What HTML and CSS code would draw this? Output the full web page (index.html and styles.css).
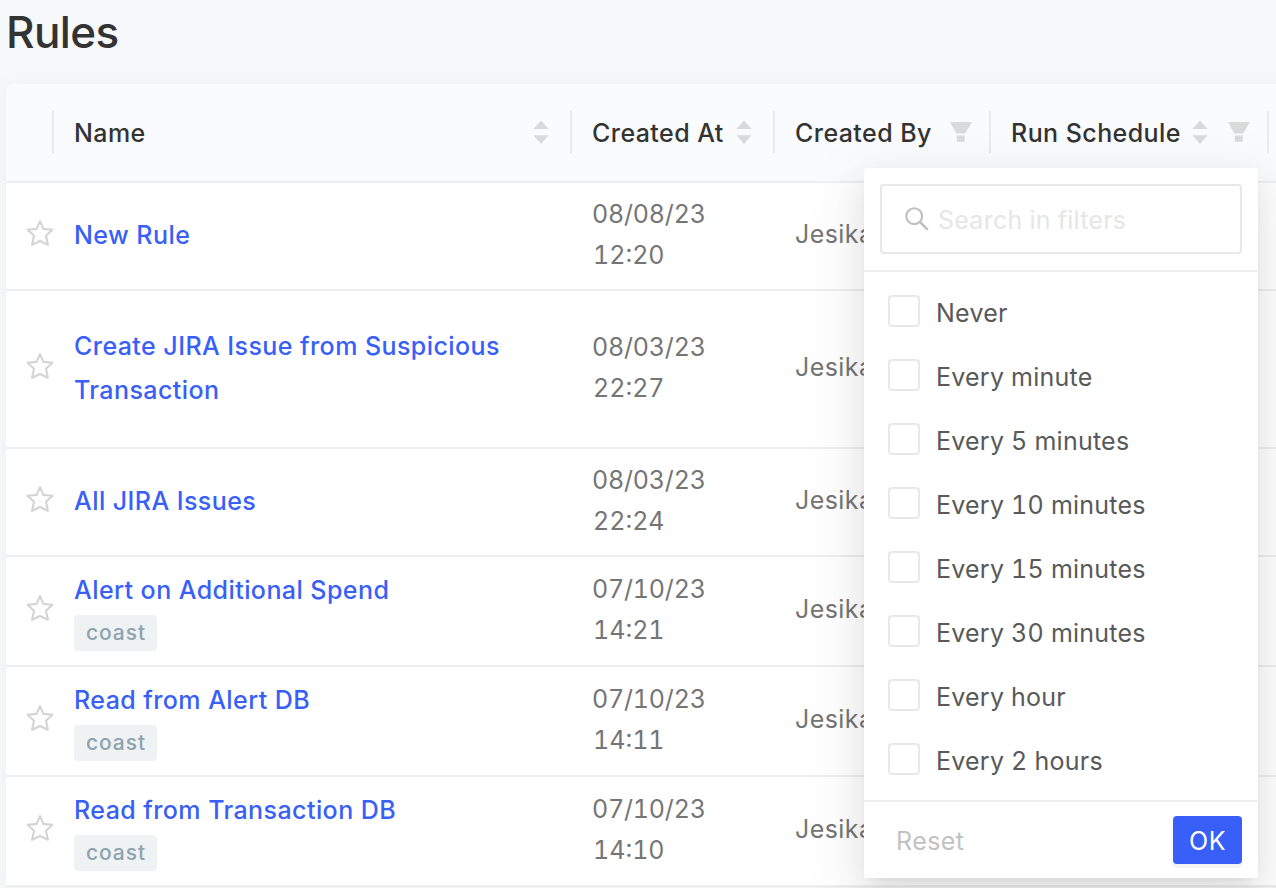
FILE: index.html
```html
<!DOCTYPE html>
<html lang="en">
<head>
<meta charset="utf-8">
<title>Rules</title>
<link rel="stylesheet" href="styles.css">
</head>
<body>
<svg class="defs" aria-hidden="true">
  <symbol id="star" viewBox="0 0 28 28"><path d="M14 2.2L17.4 9.9L26.4 10.8L20 16.7L21.9 25.8L14 22L6.1 25.8L8 16.7L1.6 10.8L10.6 9.9Z" fill="none" stroke="#d4d4d4" stroke-width="2.1" stroke-linejoin="round"/></symbol>
  <symbol id="sort" viewBox="0 0 16 24"><path d="M8 0.5L15.7 9H0.3ZM8 24L0.3 15.3H15.7Z" fill="#d9dada"/></symbol>
  <symbol id="funnel" viewBox="0 0 22 20"><path d="M.6 0H21.2Q21.8 0 21.5.7L15.2 11.6H6.4L.3.7Q0 0 .6 0ZM6.8 13.6H14.8V19.2Q14.8 19.8 14.2 19.8H7.4Q6.8 19.8 6.8 19.2Z" fill="#d9dada"/></symbol>
</svg>
<h1 class="title">Rules</h1>
<main class="card">
  <div class="row head">
    <div class="cell"></div>
    <div class="cell"><span class="label">Name</span><svg class="sort push"><use href="#sort"/></svg></div>
    <div class="cell"><span class="label">Created At</span><svg class="sort push"><use href="#sort"/></svg></div>
    <div class="cell"><span class="label">Created By</span><svg class="funnel push"><use href="#funnel"/></svg></div>
    <div class="cell"><span class="label">Run Schedule</span><svg class="sort"><use href="#sort"/></svg><svg class="funnel push"><use href="#funnel"/></svg></div>
  </div>
  <div class="row">
    <svg class="star"><use href="#star"/></svg>
    <div class="name"><a>New Rule</a></div><div class="date">08/08/23<span class="time">12:20</span></div><div class="by">Jesika</div>
  </div>
  <div class="row tall">
    <svg class="star"><use href="#star"/></svg>
    <div class="name"><a>Create JIRA Issue from Suspicious Transaction</a></div><div class="date">08/03/23<span class="time">22:27</span></div><div class="by">Jesika</div>
  </div>
  <div class="row">
    <svg class="star"><use href="#star"/></svg>
    <div class="name"><a>All JIRA Issues</a></div><div class="date">08/03/23<span class="time">22:24</span></div><div class="by">Jesika</div>
  </div>
  <div class="row tagged">
    <svg class="star"><use href="#star"/></svg>
    <div class="name"><a>Alert on Additional Spend</a><span class="tag">coast</span></div><div class="date">07/10/23<span class="time">14:21</span></div><div class="by">Jesika</div>
  </div>
  <div class="row tagged">
    <svg class="star"><use href="#star"/></svg>
    <div class="name"><a>Read from Alert DB</a><span class="tag">coast</span></div><div class="date">07/10/23<span class="time">14:11</span></div><div class="by">Jesika</div>
  </div>
  <div class="row tagged">
    <svg class="star"><use href="#star"/></svg>
    <div class="name"><a>Read from Transaction DB</a><span class="tag">coast</span></div><div class="date">07/10/23<span class="time">14:10</span></div><div class="by">Jesika</div>
  </div>
</main>
<section class="filter">
  <div class="search-wrap">
    <div class="search">
      <svg class="glass" viewBox="0 0 24 24"><circle cx="9.2" cy="9.2" r="7.9" fill="none" stroke="#bfbfbf" stroke-width="2.1"/><path d="M14.9 14.9L22.8 22.8" stroke="#bfbfbf" stroke-width="2.5"/></svg>
      <input class="query" placeholder="Search in filters" aria-label="Search in filters">
    </div>
  </div>
  <div class="options">
    <label class="option"><span class="box"></span><span class="text">Never</span></label>
    <label class="option"><span class="box"></span><span class="text">Every minute</span></label>
    <label class="option"><span class="box"></span><span class="text">Every 5 minutes</span></label>
    <label class="option"><span class="box"></span><span class="text">Every 10 minutes</span></label>
    <label class="option"><span class="box"></span><span class="text">Every 15 minutes</span></label>
    <label class="option"><span class="box"></span><span class="text">Every 30 minutes</span></label>
    <label class="option"><span class="box"></span><span class="text">Every hour</span></label>
    <label class="option"><span class="box"></span><span class="text">Every 2 hours</span></label>
  </div>
  <div class="actions"><button class="reset">Reset</button><button class="ok">OK</button></div>
</section>
</body>
</html>
```
FILE: styles.css
```css
* { box-sizing: border-box; }
body {
  margin: 0;
  height: 888px;
  overflow: hidden;
  position: relative;
  background: #f7f8fa;
  font-family: Inter, "Liberation Sans", sans-serif;
  font-size: 25px;
  letter-spacing: 0.43px;
  font-feature-settings: "tnum";
  color: #757575;
}
svg { display: block; flex: none; }
.defs { position: absolute; width: 0; height: 0; }
.title {
  margin: 0;
  height: 84px;
  padding-left: 6px;
  font-size: 44px;
  line-height: 64px;
  font-weight: 500;
  letter-spacing: -0.6px;
  color: #333;
}
.card {
  margin-left: 6px;
  width: 1300px;
  background: #fff;
  border-radius: 8px 0 0 0;
  box-shadow: 0 2px 20px rgba(60, 80, 90, 0.06);
}
.row {
  display: grid;
  grid-template-columns: 48px 518px 203px 216px 278px;
  align-items: center;
  height: 108px;
  padding-bottom: 4px;
  border-bottom: 2px solid #eeeeef;
}
.tall { height: 158px; }
.tagged { height: 110px; }
.head {
  height: 99px;
  padding-bottom: 2px;
  background: #fafbfd;
  border-radius: 8px 0 0 0;
  color: #333;
  font-weight: 500;
}
.cell {
  display: flex;
  align-items: center;
  height: 42px;
  padding: 0 20px;
  border-right: 2px solid #e9eaec;
  white-space: nowrap;
}
.label { padding-top: 2px; }
.sort { width: 16px; height: 24px; margin-left: 11px; }
.funnel { width: 22px; height: 20px; }
.head .push { margin-left: auto; }
.sort.push { margin-right: 1px; }
.funnel.push { margin-right: -3px; }
.star { width: 28px; height: 28px; margin: 0 0 2px 20px; }
.name { padding: 0 20px; line-height: 44px; font-weight: 500; color: #3860f8; }
.name a { display: block; }
.row:not(.tagged) > .name { padding-top: 2px; }
.tag {
  display: block;
  width: 83px;
  height: 36px;
  margin-top: 3px;
  padding-left: 1px;
  border-radius: 4px;
  background: #eef2f3;
  color: #8fa3ae;
  font-size: 21px;
  line-height: 35px;
  letter-spacing: 0.9px;
  text-align: center;
}
.date { padding: 2px 0 0 20px; line-height: 41px; letter-spacing: -0.2px; }
.time { display: block; padding-left: 1px; letter-spacing: 0; }
.by { padding-left: 20px; }
.filter {
  position: absolute;
  left: 864px;
  top: 168px;
  width: 394px;
  height: 710px;
  border-radius: 4px 4px 0 0;
  background: #fff;
  box-shadow: 0 6px 12px -8px rgba(0,0,0,.12), 0 12px 32px rgba(0,0,0,.08), 0 18px 56px 16px rgba(0,0,0,.05);
  color: #595959;
  letter-spacing: 0.23px;
}
.search-wrap { height: 104px; padding: 16px; border-bottom: 2px solid #f0f0f0; }
.search {
  display: flex;
  align-items: center;
  height: 70px;
  padding: 0 22px 0 23px;
  border: 2px solid #e8e8e8;
  border-radius: 4px;
}
.glass { width: 24px; height: 24px; margin-right: 9px; }
.query {
  flex: 1;
  min-width: 0;
  padding: 1px 0 0;
  border: 0;
  outline: 0;
  background: none;
  font: inherit;
  letter-spacing: 0.25px;
}
.query::placeholder { color: #e6e6e6; opacity: 1; }
.options { height: 528px; padding-top: 8px; }
.option { display: flex; align-items: center; height: 64px; padding-left: 24px; }
.box {
  width: 32px;
  height: 32px;
  margin: 0 16px 2px 0;
  border: 2px solid #e8e8e8;
  border-radius: 4px;
}
.text { padding-top: 2px; }
.actions {
  display: flex;
  justify-content: space-between;
  align-items: center;
  height: 78px;
  padding: 0 16px;
  border-top: 2px solid #f0f0f0;
}
.reset, .ok { padding: 2px 0 0; border: 0; font: inherit; letter-spacing: 0.45px; height: 48px; }
.reset { margin-left: 16px; background: none; color: #c2c2c2; }
.ok {
  width: 69px;
  border-radius: 4px;
  background: #3860f8;
  color: #fff;
  box-shadow: 0 4px 0 rgba(0,0,0,.045);
}
```
